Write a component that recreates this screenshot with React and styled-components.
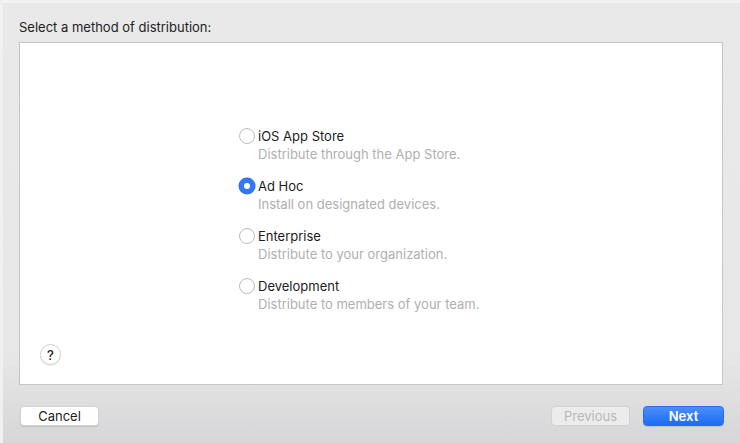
import styled, { createGlobalStyle } from "styled-components";

const Global = createGlobalStyle`
  html, body { margin: 0; padding: 0; }
  body {
    font-family: Inter, "Liberation Sans", Arial, sans-serif;
    -webkit-font-smoothing: antialiased;
  }
`;

const options = [
  { id: "store", title: "iOS App Store", sub: "Distribute through the App Store." },
  { id: "adhoc", title: "Ad Hoc", sub: "Install on designated devices." },
  { id: "enterprise", title: "Enterprise", sub: "Distribute to your organization." },
  { id: "dev", title: "Development", sub: "Distribute to members of your team." },
];

export default function App() {
  const selected = "adhoc";
  return (
    <Window>
      <Global />
      <Title>Select a method of distribution:</Title>
      <Panel>
        <OptionList>
          {options.map((o) => (
            <Option key={o.id}>
              <Radio $on={o.id === selected} />
              <OptionText>
                <OptionTitle>{o.title}</OptionTitle>
                <OptionSub>{o.sub}</OptionSub>
              </OptionText>
            </Option>
          ))}
        </OptionList>
        <HelpButton>?</HelpButton>
      </Panel>
      <Footer>
        <Button>Cancel</Button>
        <Spacer />
        <Button disabled>Previous</Button>
        <Button $primary>Next</Button>
      </Footer>
    </Window>
  );
}

const Window = styled.div`
  width: 740px;
  height: 443px;
  box-sizing: border-box;
  display: flex;
  flex-direction: column;
  background: linear-gradient(#e9e9e9 0%, #e7e7e7 80%, #d6d6d8 100%);
  border-left: 3px solid #f0f0f0;
  border-top: 3px solid #f2f2f2;
  overflow: hidden;
`;

const Title = styled.div`
  font-size: 13px;
  line-height: 16px;
  color: #222;
  padding: 16px 0 0 16px;
  height: 23px;
`;

const Panel = styled.div`
  margin-left: 16px;
  width: 704px;
  height: 343px;
  box-sizing: border-box;
  background: #fff;
  border: 1px solid #c6c6c6;
  display: flex;
  flex-direction: column;
`;

const OptionList = styled.div`
  display: flex;
  flex-direction: column;
  gap: 16px;
  padding: 85px 0 0 219px;
`;

const Option = styled.div`
  display: flex;
  align-items: flex-start;
  gap: 3px;
`;

const Radio = styled.span`
  width: 16px;
  height: 16px;
  box-sizing: border-box;
  border-radius: 50%;
  flex-shrink: 0;
  border: ${(p) => (p.$on ? "5px solid #3478f6" : "1px solid #bdbdbd")};
  background: #fff;
  box-shadow: ${(p) => (p.$on ? "0 0 0 0.5px #2a66d9" : "inset 0 1px 1px rgba(0,0,0,0.04)")};
`;

const OptionText = styled.div`
  display: flex;
  flex-direction: column;
  gap: 2px;
`;

const OptionTitle = styled.div`
  font-size: 13px;
  line-height: 16px;
  color: #1d1d1d;
`;

const OptionSub = styled.div`
  font-size: 13px;
  line-height: 16px;
  color: #afafaf;
`;

const HelpButton = styled.div`
  margin: auto 0 19px 20px;
  width: 21px;
  height: 21px;
  box-sizing: border-box;
  border-radius: 50%;
  border: 1px solid #cfcfcf;
  box-shadow: 0 1px 1px rgba(0,0,0,0.08);
  display: flex;
  align-items: center;
  justify-content: center;
  font-size: 13px;
  font-weight: 500;
  color: #222;
  background: #fff;
`;

const Footer = styled.div`
  display: flex;
  align-items: flex-start;
  gap: 13px;
  padding: 21px 16px 0 17px;
`;

const Spacer = styled.div`
  flex: 1;
`;

const Button = styled.button`
  width: ${(p) => (p.$primary ? "81px" : "79px")};
  height: 20px;
  border-radius: 4px;
  font-family: inherit;
  font-size: 13px;
  padding: 0;
  border: ${(p) => (p.$primary ? "1px solid #2a6de8" : "1px solid #d2d2d2")};
  background: ${(p) =>
    p.$primary ? "linear-gradient(#4a8ef9, #1c6cf4)" : p.disabled ? "#ececec" : "#fff"};
  color: ${(p) => (p.$primary ? "#fff" : p.disabled ? "#b8b8b8" : "#1d1d1d")};
  box-shadow: ${(p) => (p.disabled ? "none" : "0 1px 1px rgba(0,0,0,0.12)")};
  font-weight: ${(p) => (p.$primary ? 600 : 400)};
`;
